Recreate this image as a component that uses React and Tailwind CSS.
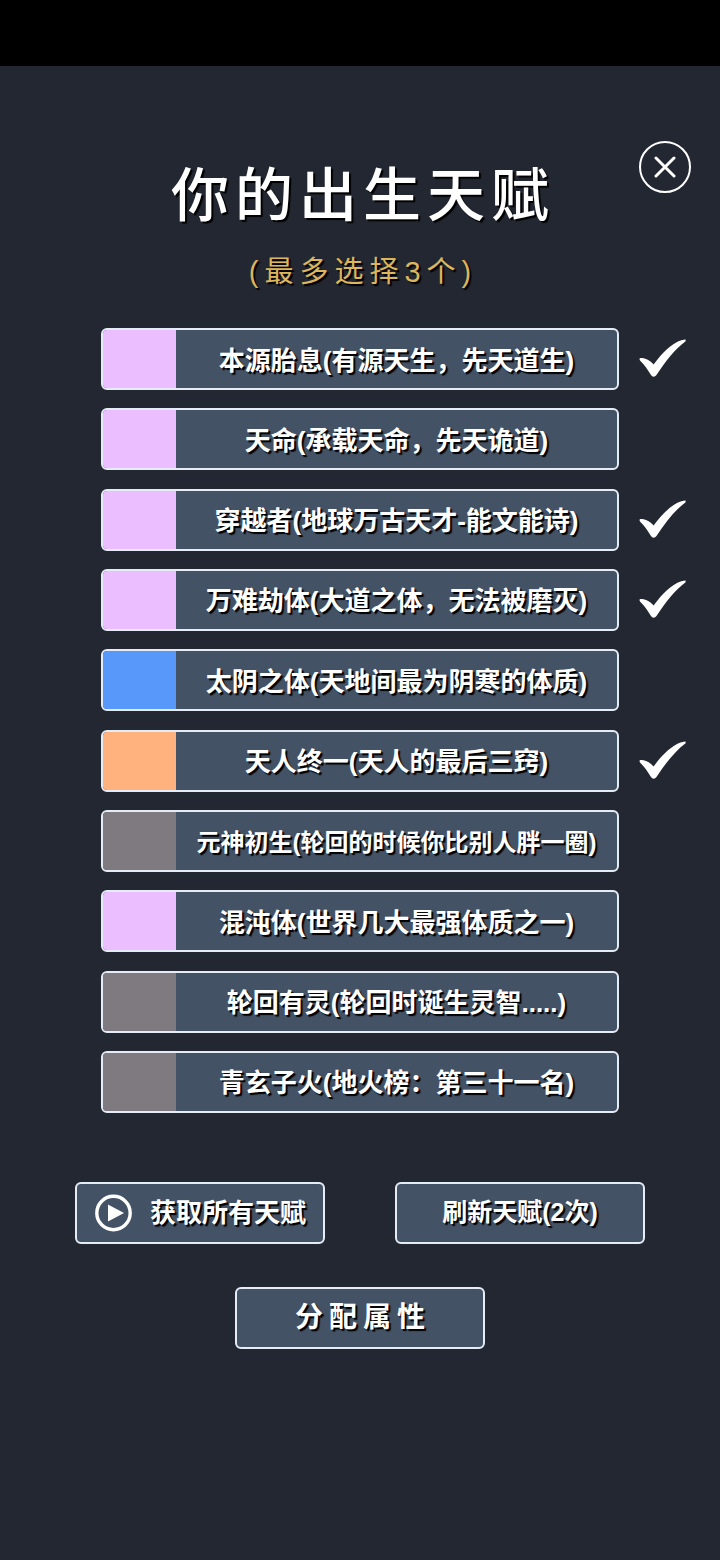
import React, { useState } from 'react'

const talentList = [
    { id: 1, name: "本源胎息(有源天生，先天道生)", color: "bg-[#ebbfff]" },
    { id: 2, name: "天命(承载天命，先天诡道)", color: "bg-[#ebbfff]" },
    { id: 3, name: "穿越者(地球万古天才-能文能诗)", color: "bg-[#ebbfff]" },
    { id: 4, name: "万难劫体(大道之体，无法被磨灭)", color: "bg-[#ebbfff]" },
    { id: 5, name: "太阴之体(天地间最为阴寒的体质)", color: "bg-[#5898fa]" },
    { id: 6, name: "天人终一(天人的最后三窍)", color: "bg-[#ffb27d]" },
    { id: 7, name: "元神初生(轮回的时候你比别人胖一圈)", color: "bg-[#7f7a7f]", small: true },
    { id: 8, name: "混沌体(世界几大最强体质之一)", color: "bg-[#ebbfff]" },
    { id: 9, name: "轮回有灵(轮回时诞生灵智.....)", color: "bg-[#7f7a7f]" },
    { id: 10, name: "青玄子火(地火榜：第三十一名)", color: "bg-[#7f7a7f]" },
]

function CheckMark() {
    return (
        <svg width="48" height="40" viewBox="0 0 48 40" fill="#fff" aria-hidden="true">
            <path d="M0.800 19.300 C2.500 18.800 4.500 19 7 20 C10 21.200 12.500 23 14.600 25.600 C20 18 28 8.500 38 3 C41 1.500 44 0.600 46.600 0.600 L46.600 2.200 C36 10 26 23 18.500 34.500 C16 38.300 13.800 38.600 11.800 35.800 C9 31.500 5.500 25.500 1.200 21.800 C0.500 21 0.400 20 0.800 19.300 Z" />
        </svg>
    )
}

function ActionButton({ children, className }) {
    return (
        <button
            type="button"
            className={`flex h-[62px] w-[250px] items-center justify-center rounded-md border-2 border-[#e6ecf5] bg-[#445265] font-bold whitespace-nowrap [text-shadow:2px_2px_1px_#000] ${className}`}
        >
            {children}
        </button>
    )
}

function App() {
    let [selected, setSelected] = useState([1, 3, 4, 6])

    let toggleTalent = (id) => {
        if (selected.includes(id)) {
            setSelected(selected.filter(s => s !== id))
        } else {
            setSelected([...selected, id])
        }
    }

    return (
        <div className="min-h-screen bg-[#232731] text-white font-['Liberation_Sans','Noto_Sans_CJK_SC',sans-serif]">

            {/* STATUS BAR */}
            <div className="h-[66px] bg-black"></div>

            <main lang="zh-CN" className="pt-[75px] pb-10">

                {/* HEADER */}
                <header className="grid grid-cols-[1fr_auto_1fr] px-[29px]">
                    <h1 className="col-start-2 pt-[22px] pl-[6px] text-[58px] leading-[66px] font-medium tracking-[6px] [text-shadow:2px_2px_1px_#000]">
                        你的出生天赋
                    </h1>
                    <button
                        type="button"
                        aria-label="关闭"
                        className="flex h-[52px] w-[52px] items-center justify-center justify-self-end rounded-full border-2 border-white"
                    >
                        <svg width="22" height="22" viewBox="0 0 22 22" fill="none" stroke="#fff" strokeWidth="3" strokeLinecap="round" aria-hidden="true">
                            <path d="M2 2 L20 20 M20 2 L2 20" />
                        </svg>
                    </button>
                </header>

                <p className="mt-[23px] pl-[6px] text-center text-[29px] leading-10 tracking-[6px] text-[#dcb55c] [text-shadow:2px_2px_1px_#000]">
                    (最多选择3个)
                </p>

                {/* TALENTS */}
                <ul className="mt-9 flex min-h-[785px] flex-col justify-between">
                    {talentList.map((talent) => {
                        const isSelected = selected.includes(talent.id)

                        return (
                            <li key={talent.id} className="grid grid-cols-[1fr_101px] items-center pl-[101px]">
                                <button
                                    type="button"
                                    aria-pressed={isSelected}
                                    onClick={() => toggleTalent(talent.id)}
                                    className="flex h-[62px] overflow-hidden rounded-md border-2 border-[#e6ecf5] bg-[#445265]"
                                >
                                    <span className={`h-full w-[73px] shrink-0 ${talent.color}`}></span>
                                    <span className={`flex-1 self-center pt-1 text-center font-bold whitespace-nowrap [text-shadow:2px_2px_1px_#000] ${talent.small ? "text-[24px]" : "text-[26px]"}`}>
                                        {talent.name}
                                    </span>
                                </button>
                                <span className="pl-5">
                                    {isSelected && <CheckMark />}
                                </span>
                            </li>
                        )
                    })}
                </ul>

                {/* ACTIONS */}
                <div className="mt-[69px] flex justify-center gap-[70px]">
                    <ActionButton className="gap-[18px] text-[26px]">
                        <svg width="38" height="38" viewBox="0 0 38 38" aria-hidden="true">
                            <circle cx="19.5" cy="19" r="16.700" fill="none" stroke="#fff" strokeWidth="3.400" />
                            <path d="M14 10.500 V27.500 L30 19 Z" fill="#fff" />
                        </svg>
                        获取所有天赋
                    </ActionButton>
                    <ActionButton className="text-[25px]">刷新天赋(2次)</ActionButton>
                </div>
                <div className="mt-[43px] flex justify-center">
                    <ActionButton className="pl-[6px] text-[28px] tracking-[6px]">分配属性</ActionButton>
                </div>
            </main>
        </div>
    )
}

export default App
